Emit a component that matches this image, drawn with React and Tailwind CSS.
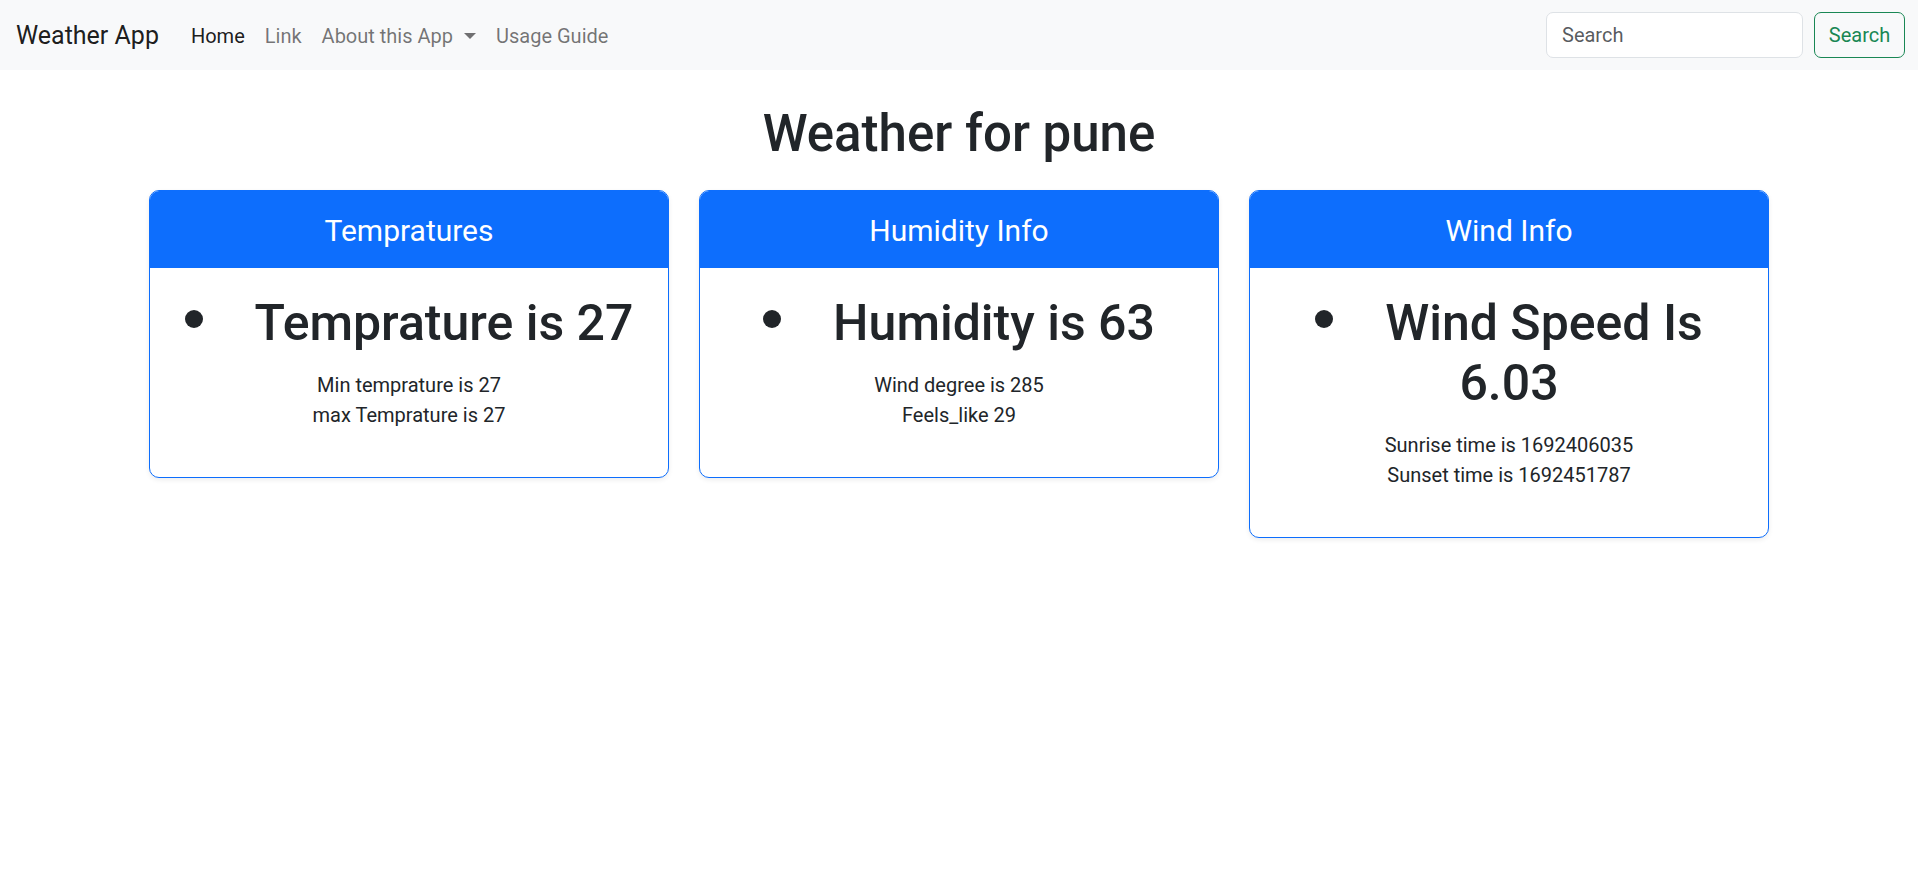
import { useState } from 'react';

const cards = [
  {
    title: 'Tempratures',
    main: 'Temprature is 27',
    lines: ['Min temprature is 27', 'max Temprature is 27'],
  },
  {
    title: 'Humidity Info',
    main: 'Humidity is 63',
    lines: ['Wind degree is 285', 'Feels_like 29'],
  },
  {
    title: 'Wind Info',
    main: 'Wind Speed Is 6.03',
    lines: ['Sunrise time is 1692406035', 'Sunset time is 1692451787'],
  },
];

const WeatherCard = ({ title, main, lines }) => (
  <div className="border border-[#0d6efd] rounded-[10px] overflow-hidden bg-white shadow-[0_2px_5px_rgba(0,0,0,0.075)]">
    <div className="h-[77px] pt-[2px] bg-[#0d6efd] flex items-center justify-center text-white text-[30px] leading-none">
      {title}
    </div>
    <div className="px-[20px] pt-[25px] pb-[47px] text-center text-[#212529]">
      <ul className="mb-[17px]">
        <li className="text-[50px] leading-[60px] font-medium">
          <span className="inline-block w-[18px] h-[18px] rounded-full bg-[#212529] mr-[52px] align-[12px]"></span>
          {main}
        </li>
      </ul>
      {lines.map((line) => (
        <div key={line} className="text-[20px] leading-[30px]">
          {line}
        </div>
      ))}
    </div>
  </div>
);

const App = () => {
  const [query, setQuery] = useState('');

  return (
    <div className="min-h-screen bg-white font-[Roboto,sans-serif]">
      {/* Navbar */}
      <nav className="h-[70px] bg-[#f8f9fa] flex items-center pl-[16px] pr-[13px]">
        <a href="/" className="text-[25px] text-black/90 mr-[22px] pt-[1px]">
          Weather App
        </a>
        <ul className="flex items-center text-[20px] pt-[1px]">
          <li>
            <a href="/" className="px-[10px] text-black/90">Home</a>
          </li>
          <li>
            <a href="#" className="px-[10px] text-black/55">Link</a>
          </li>
          <li>
            <a href="#" className="px-[10px] text-black/55 flex items-center">
              About this App
              <span className="ml-[11px] w-0 h-0 border-x-[6px] border-x-transparent border-t-[6px] border-t-black/55"></span>
            </a>
          </li>
          <li>
            <a href="#" className="px-[10px] text-black/55">Usage Guide</a>
          </li>
        </ul>
        <form className="ml-auto flex items-center gap-[11px]" onSubmit={(e) => e.preventDefault()}>
          <input
            type="search"
            placeholder="Search"
            value={query}
            onChange={(e) => setQuery(e.target.value)}
            className="w-[257px] h-[46px] px-[15px] bg-white border border-[#dee2e6] rounded-[7px] text-[20px] text-[#212529] placeholder:text-[rgba(33,37,41,0.75)] outline-none"
          />
          <button
            type="submit"
            className="w-[91px] h-[46px] border border-[#198754] rounded-[7px] text-[20px] text-[#198754]"
          >
            Search
          </button>
        </form>
      </nav>

      {/* Title */}
      <h1 className="mt-[34px] text-center text-[51px] leading-[60px] font-medium text-[#212529]">
        Weather for pune
      </h1>

      {/* Cards */}
      <div className="mt-[26px] mx-auto w-[1620px] grid grid-cols-3 gap-[30px] items-start">
        {cards.map((card) => (
          <WeatherCard key={card.title} {...card} />
        ))}
      </div>
    </div>
  );
};

export default App;
